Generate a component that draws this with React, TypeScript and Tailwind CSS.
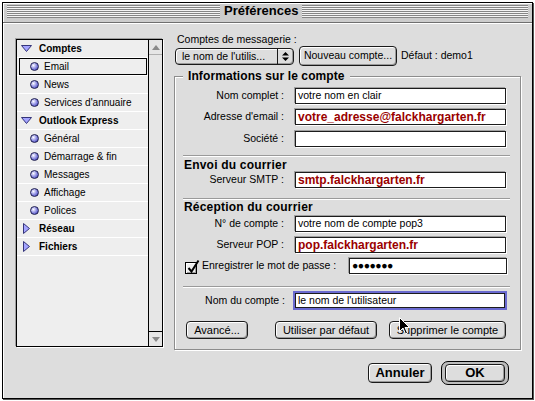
import React from "react";

const stripes =
  "bg-[repeating-linear-gradient(to_bottom,#858585_0px,#858585_1px,#f4f4f4_1px,#f4f4f4_2px)]";

function Bullet() {
  return (
    <span className="w-[9px] h-[9px] shrink-0 rounded-full border border-[#202050] bg-[radial-gradient(circle_at_35%_35%,#ffffff_0%,#c4c4f4_25%,#6464d0_70%,#30308a_100%)]" />
  );
}

function TriDown() {
  return (
    <svg width="11" height="7" className="shrink-0">
      <path d="M0.5 0.5 H10.5 L5.5 6.5 Z" fill="#a4a4ff" stroke="#35357a" />
    </svg>
  );
}

function TriRight() {
  return (
    <svg width="7" height="11" className="shrink-0">
      <path d="M0.5 0.5 V10.5 L6.5 5.5 Z" fill="#a4a4ff" stroke="#35357a" />
    </svg>
  );
}

type Item = { label: string; kind: "open" | "closed" | "item"; selected?: boolean };

const items: Item[] = [
  { label: "Comptes", kind: "open" },
  { label: "Email", kind: "item", selected: true },
  { label: "News", kind: "item" },
  { label: "Services d'annuaire", kind: "item" },
  { label: "Outlook Express", kind: "open" },
  { label: "Général", kind: "item" },
  { label: "Démarrage & fin", kind: "item" },
  { label: "Messages", kind: "item" },
  { label: "Affichage", kind: "item" },
  { label: "Polices", kind: "item" },
  { label: "Réseau", kind: "closed" },
  { label: "Fichiers", kind: "closed" },
];

function ListRow({ item }: { item: Item }) {
  if (item.kind !== "item") {
    return (
      <div className="h-[18px] shrink-0 border-b border-white flex items-center">
        {item.kind === "open" ? (
          <span className="ml-[4px] w-[11px] flex">
            <TriDown />
          </span>
        ) : (
          <span className="ml-[6px] w-[9px] flex">
            <TriRight />
          </span>
        )}
        <span className="ml-[7px] text-[10px] font-bold leading-[12px]">{item.label}</span>
      </div>
    );
  }
  return (
    <div className="h-[18px] shrink-0 border-b border-white flex">
      <div
        className={
          item.selected
            ? "flex-1 flex items-center ml-[2px] mr-[1px] border border-black"
            : "flex-1 flex items-center ml-[2px] mr-[1px] border border-transparent"
        }
      >
        <span className="ml-[10px] flex">
          <Bullet />
        </span>
        <span className="ml-[5px] text-[10px] leading-[12px]">{item.label}</span>
      </div>
    </div>
  );
}

function Btn({ children, className }: { children: React.ReactNode; className: string }) {
  return (
    <div
      className={
        "flex items-center justify-center border border-[#1a1a1a] rounded-[4px] bg-[#dddddd] shadow-[inset_1px_1px_0_#ffffff,inset_-1px_-1px_0_#9a9a9a] whitespace-nowrap " +
        className
      }
    >
      {children}
    </div>
  );
}

function Field({ value, red, className }: { value: string; red?: boolean; className: string }) {
  return (
    <div
      className={
        "h-[16px] border border-[#1c1c1c] bg-white pl-[2px] flex items-center whitespace-nowrap overflow-hidden shadow-[-1px_-1px_0_#a0a0a0,1px_1px_0_#ffffff] " +
        (red ? "text-[12px] font-bold text-[#9a0000] " : "text-[10.5px] ") +
        className
      }
    >
      {value}
    </div>
  );
}

function FieldRow({ label, value, red, mt }: { label: string; value: string; red?: boolean; mt: string }) {
  return (
    <div className={"flex items-center h-[16px] " + mt}>
      <span className="w-[109px] text-right text-[10.5px] whitespace-nowrap">{label}</span>
      <Field value={value} red={red} className="ml-[11px] w-[211px]" />
    </div>
  );
}

function Sep({ mt }: { mt: string }) {
  return <div className={"ml-[8px] w-[327px] h-[2px] border-t border-[#9a9a9a] border-b border-b-white " + mt} />;
}

export default function App() {
  return (
    <div className="w-[535px] h-[401px] bg-white relative overflow-hidden text-black font-['Liberation_Sans',Arial,sans-serif]">
      <div className="ml-[2px] mt-[2px] w-[531px] h-[397px] border border-black bg-[#dddddd] flex flex-col shadow-[1px_1px_0_#555]">
        {/* title bar */}
        <div className="h-[20px] shrink-0 bg-[#cccccc] border-b border-[#6f6f6f] shadow-[inset_1px_1px_0_#ffffff] flex items-start pt-[2px] px-[4px]">
          <div className={"w-[213px] h-[13px] " + stripes} />
          <span className="px-[4px] text-[13px] font-bold leading-[14px] -mt-[1px]">Préférences</span>
          <div className={"flex-1 h-[13px] " + stripes} />
        </div>

        {/* content */}
        <div className="flex-1 flex items-start shadow-[inset_1px_1px_0_#ffffff]">
          {/* list */}
          <div className="ml-[13px] mt-[16px] w-[147px] h-[308px] border border-black bg-[#eeeeee] flex shadow-[1px_1px_0_#ffffff,-1px_-1px_0_#a0a0a0]">
            <div className="flex-1 flex flex-col">
              {items.map((it) => (
                <ListRow key={it.label} item={it} />
              ))}
            </div>
            <div className="w-[14px] border-l border-black flex flex-col justify-between bg-[#e6e6e6]">
              <div className="h-[15px] border-b border-[#b0b0b0] flex items-center justify-center">
                <svg width="8" height="5">
                  <path d="M0 5 L4 0 L8 5 Z" fill="#8a8a8a" />
                </svg>
              </div>
              <div className="h-[15px] border-t border-black flex items-center justify-center">
                <svg width="8" height="5">
                  <path d="M0 0 L8 0 L4 5 Z" fill="#8a8a8a" />
                </svg>
              </div>
            </div>
          </div>

          {/* right column */}
          <div className="ml-[11px] mt-[10px] w-[347px] flex flex-col">
            <div className="h-[13px] pl-[3px] text-[10.5px] leading-[13px]">Comptes de messagerie :</div>
            <div className="h-[20px] flex items-center">
              <div className="ml-[1px] w-[119px] h-[17px] flex border border-[#1a1a1a] rounded-[4px] bg-[#dddddd] shadow-[inset_1px_1px_0_#ffffff,inset_-1px_-1px_0_#9a9a9a]">
                <span className="flex-1 pl-[6px] text-[10.5px] leading-[15px] whitespace-nowrap overflow-hidden">
                  le nom de l'utilis...
                </span>
                <span className="w-[16px] border-l border-[#1a1a1a] flex items-center justify-center">
                  <svg width="7" height="9">
                    <path d="M0 3.5 L3.5 0 L7 3.5 Z M0 5.5 L7 5.5 L3.5 9 Z" fill="#000" />
                  </svg>
                </span>
              </div>
              <Btn className="ml-[5px] w-[98px] h-[20px] text-[10.5px]">Nouveau compte...</Btn>
              <span className="ml-[4px] text-[10.5px] whitespace-nowrap">Défaut : demo1</span>
            </div>

            {/* group box */}
            <div className="mt-[10px] w-[347px] h-[274px] relative border border-[#8c8c8c] shadow-[1px_1px_0_#ffffff,inset_1px_1px_0_#ffffff] flex flex-col">
              <span className="absolute left-[8px] top-[-8px] px-[5px] bg-[#dddddd] text-[12px] font-bold leading-[14px] tracking-[0.1px] whitespace-nowrap">
                Informations sur le compte
              </span>
              <FieldRow mt="mt-[11px]" label="Nom complet :" value="votre nom en clair" />
              <FieldRow mt="mt-[5px]" label="Adresse d'email :" value="votre_adresse@falckhargarten.fr" red />
              <FieldRow mt="mt-[6px]" label="Société :" value="" />
              <Sep mt="mt-[8px]" />
              <div className="mt-[2px] ml-[9px] h-[12px] text-[12px] font-bold leading-[12px] tracking-[0.2px]">
                Envoi du courrier
              </div>
              <FieldRow mt="mt-[1px]" label="Serveur SMTP :" value="smtp.falckhargarten.fr" red />
              <Sep mt="mt-[10px]" />
              <div className="mt-[1px] ml-[9px] h-[12px] text-[12px] font-bold leading-[12px] tracking-[0.2px]">
                Réception du courrier
              </div>
              <FieldRow mt="mt-[3px]" label="N° de compte :" value="votre nom de compte pop3" />
              <FieldRow mt="mt-[5px]" label="Serveur POP :" value="pop.falckhargarten.fr" red />
              <div className="mt-[5px] h-[16px] flex items-center">
                <span className="ml-[10px] w-[12px] h-[12px] mt-[3px] border border-black bg-[#eeeeee] shadow-[inset_1px_1px_0_#ffffff,inset_-1px_-1px_0_#a0a0a0] relative">
                  <svg width="14" height="14" className="absolute left-[1px] top-[-3px] overflow-visible">
                    <path d="M1.5 8 L4.5 11.5 L11.5 0.5" fill="none" stroke="#000" strokeWidth="2" />
                  </svg>
                </span>
                <span className="ml-[5px] text-[10.5px] whitespace-nowrap">Enregistrer le mot de passe :</span>
                <Field value="●●●●●●●" className="ml-auto mr-[13px] w-[158px] text-[9px] tracking-[-0.5px]" />
              </div>
              <Sep mt="mt-[12px]" />
              <div className="mt-[3px] h-[19px] flex items-center">
                <span className="w-[110px] text-right text-[10.5px] whitespace-nowrap">Nom du compte :</span>
                <div className="ml-[8px] w-[214px] h-[19px] border-2 border-[#6a6ad0] flex">
                  <div className="flex-1 border border-[#1c1c1c] bg-white pl-[2px] flex items-center text-[10.5px] whitespace-nowrap">
                    le nom de l'utilisateur
                  </div>
                </div>
              </div>
              <div className="mt-[11px] h-[18px] flex">
                <Btn className="ml-[11px] w-[62px] h-[18px] text-[11px]">Avancé...</Btn>
                <Btn className="ml-[27px] w-[102px] h-[18px] text-[11px]">Utiliser par défaut</Btn>
                <Btn className="ml-[12px] w-[117px] h-[18px] text-[11px]">Supprimer le compte</Btn>
              </div>
            </div>

            {/* dialog buttons */}
            <div className="mt-[11px] h-[24px] flex items-center justify-end pr-[12px] gap-[9px]">
              <Btn className="w-[64px] h-[20px] text-[13px] font-bold">Annuler</Btn>
              <div className="w-[68px] h-[24px] border border-black rounded-[7px] bg-[#bdbdbd] px-[3px] py-[2px] flex">
                <Btn className="flex-1 text-[13px] font-bold">OK</Btn>
              </div>
            </div>
          </div>
        </div>
      </div>

      {/* mouse pointer */}
      <svg width="12" height="19" className="absolute left-[399px] top-[317px]">
        <path
          d="M0.5 0.5 L0.5 14.5 L4 11 L6.5 17 L8.5 16 L6 10.5 L10.5 10.5 Z"
          fill="#000"
          stroke="#fff"
          strokeWidth="1"
        />
      </svg>
    </div>
  );
}
